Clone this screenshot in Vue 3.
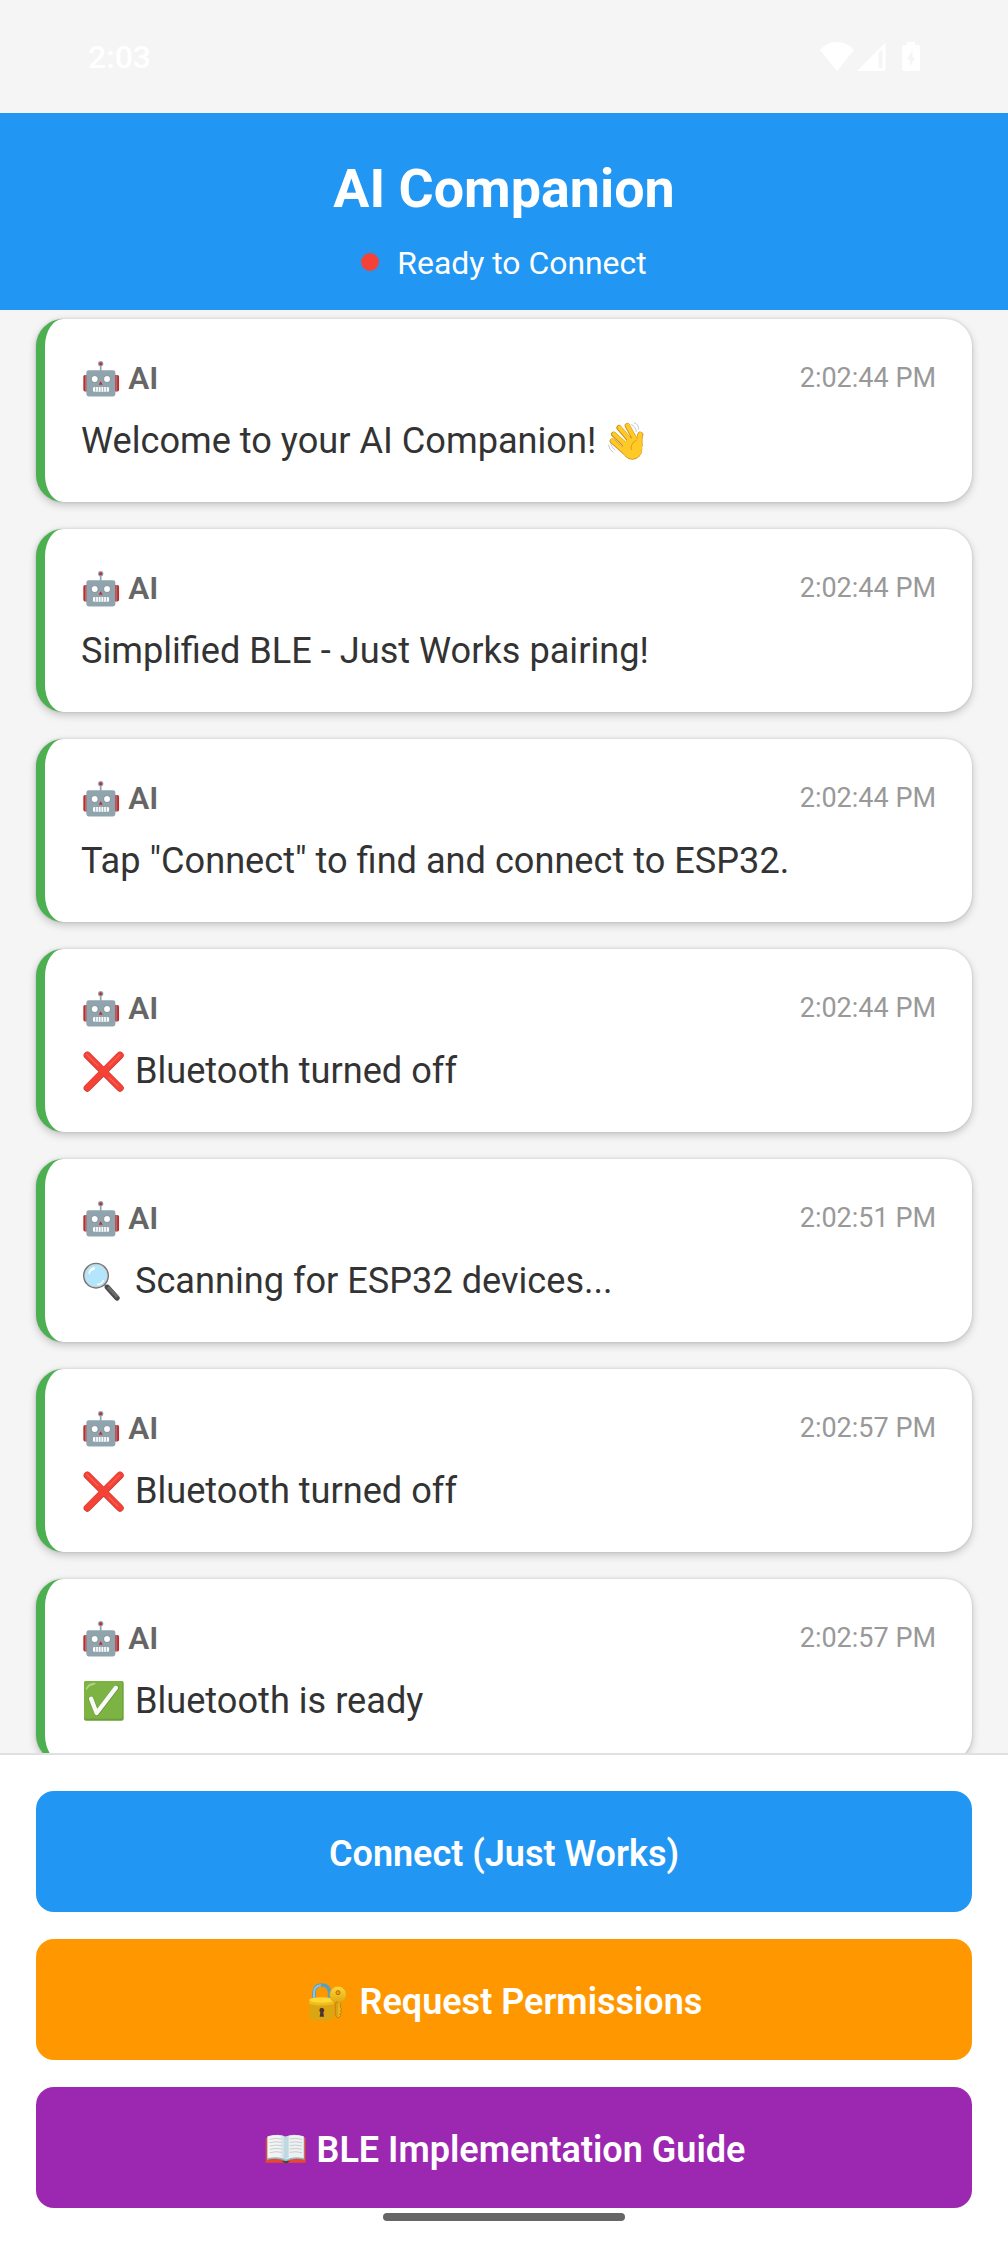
<script setup>
const messages = [
  { time: '2:02:44 PM', text: 'Welcome to your AI Companion!', after: 'wave' },
  { time: '2:02:44 PM', text: 'Simplified BLE - Just Works pairing!' },
  { time: '2:02:44 PM', text: 'Tap "Connect" to find and connect to ESP32.' },
  { time: '2:02:44 PM', before: 'cross', text: 'Bluetooth turned off' },
  { time: '2:02:51 PM', before: 'search', text: 'Scanning for ESP32 devices...' },
  { time: '2:02:57 PM', before: 'cross', text: 'Bluetooth turned off' },
  { time: '2:02:57 PM', before: 'check', text: 'Bluetooth is ready' },
]
const actions = [
  { label: 'Connect (Just Works)', tone: 'blue' },
  { label: 'Request Permissions', tone: 'orange', icon: 'lock' },
  { label: 'BLE Implementation Guide', tone: 'purple', icon: 'book' },
]
</script>

<template>
  <div class="screen">
    <svg class="defs" width="0" height="0" aria-hidden="true">
      <linearGradient id="gold" x1="0" y1="0" x2="0" y2="1">
        <stop offset="0" stop-color="#fdd835" /><stop offset="1" stop-color="#e2a610" />
      </linearGradient>
      <linearGradient id="page" x1="0" y1="0" x2="1" y2="0">
        <stop offset="0" stop-color="#f5f5f5" /><stop offset=".7" stop-color="#f1f3f4" /><stop offset="1" stop-color="#b5d3dc" />
      </linearGradient>
      <symbol id="robot" viewBox="0 0 118 118">
        <rect x="7" y="48" width="16" height="49" rx="5" fill="#c62828" />
        <rect x="98" y="48" width="16" height="49" rx="5" fill="#c62828" />
        <path d="M14 48v49M107 48v49" stroke="#90a4ae" stroke-width="2" />
        <path d="M59 16v20" stroke="#90a4ae" stroke-width="5" />
        <circle cx="59" cy="14" r="8" fill="#90a4ae" /><circle cx="59" cy="14" r="4.5" fill="#c62828" />
        <rect x="16" y="34" width="87" height="78" rx="7" fill="#90a4ae" />
        <circle cx="41" cy="60" r="10.5" fill="#fff" stroke="#62727a" stroke-width="2" />
        <circle cx="78" cy="60" r="10.5" fill="#fff" stroke="#62727a" stroke-width="2" />
        <path d="M53 77l6-10 6 10z" fill="#c62828" />
        <rect x="36" y="84" width="48" height="14" rx="4" fill="#fff" />
        <path d="M44 84v14M52 84v14M60 84v14M68 84v14M76 84v14" stroke="#90a4ae" stroke-width="2.5" />
      </symbol>
      <symbol id="wave" viewBox="0 0 135 135">
        <g stroke-linecap="round" fill="none">
          <g stroke="#c98a14" stroke-width="16">
            <path d="M22 66l38 34M26 46l42 38M42 26l36 42M67 20l22 40" />
          </g>
          <ellipse cx="82" cy="90" rx="30" ry="32" fill="#c98a14" />
          <path d="M106 47q-4 10-2 32" stroke="#c98a14" stroke-width="18" />
          <g stroke="#ffca28" stroke-width="12">
            <path d="M22 65l40 36M27 45l42 39M43 26l37 43M67 19l23 42" />
          </g>
          <ellipse cx="82" cy="89" rx="29" ry="31" fill="#ffca28" />
          <path d="M106 46q-4 10-2 35" stroke="#ffca28" stroke-width="14" />
          <path d="M94 63q-19 11-15 29" stroke="#e0a01b" stroke-width="3" />
          <g stroke="#b0bec5" stroke-width="2.5">
            <path d="M79 17q13 4 15 21M88 11q14 5 13 20M10 78q3 14 14 22M17 75q2 10 13 18" />
          </g>
        </g>
      </symbol>
      <symbol id="cross" viewBox="0 0 135 135">
        <g stroke-linecap="round" fill="none">
          <path d="M19 19l98 98M117 19l-98 98" stroke="#c73328" stroke-width="22" />
          <path d="M19 18l98 98M117 18l-98 98" stroke="#f44336" stroke-width="19" />
          <path d="M17 16l34 34M84 50l31-31M84 85l27 27" stroke="#ff7268" stroke-width="3" />
        </g>
      </symbol>
      <symbol id="search" viewBox="0 0 135 135">
        <path d="M70 76l14 14" stroke="#9e9e9e" stroke-width="7" />
        <path d="M79 85l29 32" stroke="#4b4b4b" stroke-width="16" stroke-linecap="round" />
        <path d="M81 84l28 30" stroke="#6b6b6b" stroke-width="9" />
        <circle cx="45" cy="50" r="36.5" fill="#b3e5fc" stroke="#757575" stroke-width="5" />
        <circle cx="45" cy="50" r="34" fill="none" stroke="#d8cec9" stroke-width="2" />
        <path d="M23 39q3-11 15-15 7 0 2 8-12 3-14 12-4 6-3-5z" fill="#fff" />
        <path d="M48 77q15-2 20-14" stroke="#fff" stroke-width="4" fill="none" />
      </symbol>
      <symbol id="check" viewBox="0 0 135 135">
        <rect x="9" y="6" width="119" height="119" rx="6" fill="#689f38" />
        <rect x="9" y="6" width="115" height="113" rx="6" fill="#7cb342" />
        <path d="M15 31q2-19 27-20 5 3-3 6-14 3-20 13-5 5-4 1z" fill="#aed581" />
        <path d="M30 60l18 42 58-76" fill="none" stroke="#5f9632" stroke-width="16" stroke-linecap="round" stroke-linejoin="round" />
        <path d="M30 59l17 43 58-76" fill="none" stroke="#fafafa" stroke-width="13" stroke-linecap="round" stroke-linejoin="round" />
      </symbol>
      <symbol id="lock" viewBox="0 0 135 135">
        <path d="M24 65V40q1-22 23-22t24 22v25" fill="none" stroke="#5b9fbd" stroke-width="11" />
        <path d="M24 58V40q1-20 21-21" fill="none" stroke="#8fc3da" stroke-width="6" />
        <path d="M10 63v50q0 12 37 12t37-12V63z" fill="#dba514" />
        <path d="M10 63v12q37 9 74 0V63z" fill="#f0bd1c" />
        <ellipse cx="47" cy="63" rx="37" ry="8" fill="#fdd835" />
        <path d="M47 86a8 8 0 0 0-4 14l-2 13h13l-2-13a8 8 0 0 0-5-14z" fill="#4e342e" />
        <path d="M88 62v48l8 7 9-7-4-5 6-4-4-6 4-5-4-5V62z" fill="#edb61f" stroke="#a66f12" stroke-width="2" />
        <circle cx="96" cy="47" r="25" fill="url(#gold)" stroke="#d99a13" stroke-width="1.5" />
        <circle cx="96" cy="41" r="6" fill="#ff9800" stroke="#a66f12" stroke-width="3" />
        <path d="M93 66v47" stroke="#a97517" stroke-width="2" />
      </symbol>
      <symbol id="book" viewBox="0 0 135 135">
        <path d="M8 33h120v74H77q-8 6-17 0H8z" fill="#e6492f" />
        <path d="M57 102h23l-7 7q-4 2-8 0z" fill="#37474f" />
        <path d="M12 98V30q34-13 57-1v74q-20-12-57-5z" fill="#8fb9c6" />
        <path d="M124 98V30Q91 17 68 29v74q23-12 56-5z" fill="#8fb9c6" />
        <path d="M14 93V28q33-9 54 1v69q-17-12-54-5z" fill="url(#page)" />
        <path d="M122 93V28q-33-9-54 1v69q20-12 54-5z" fill="#eef1f2" />
        <path d="M69 30v66l8-5V27z" fill="#c0d9e0" />
        <path d="M20 37q19-5 37-1M20 47q19-5 37-1M20 57q19-5 37-1M20 67q19-5 37-1M20 77q19-5 37-1M80 36q18-4 37 1M80 46q18-4 37 1M80 56q18-4 37 1M80 66q18-4 37 1M80 76q18-4 37 1" stroke="#b6b9ba" stroke-width="2" fill="none" />
      </symbol>
    </svg>

    <div class="statusbar">
      <span class="clock">2:03</span>
      <div class="indicators">
        <svg width="34" height="29" viewBox="0 0 34 29"><path d="M17 29L0 8Q7 0 17 0t17 8z" fill="#fff" /></svg>
        <svg class="signal" width="29" height="29" viewBox="0 0 29 29"><path fill-rule="evenodd" d="M0 29L28.500 .5V29zM21.500 11v15h4V7z" fill="#fff" /></svg>
        <svg class="battery" width="18" height="29" viewBox="0 0 18 29"><path fill-rule="evenodd" d="M5 0h8v3h3q2 0 2 2v22q0 2-2 2H2q-2 0-2-2V5q0-2 2-2h3zM10.500 8L5 17.500h3V25l5-9.500h-2.500z" fill="#fff" /></svg>
      </div>
    </div>

    <header class="header">
      <h1>AI Companion</h1>
      <div class="status"><i class="dot"></i><span>Ready to Connect</span></div>
    </header>

    <main class="messages">
      <article v-for="(m, i) in messages" :key="i" class="card">
        <div class="meta">
          <span class="sender"><svg class="emoji small"><use href="#robot" /></svg> AI</span>
          <time>{{ m.time }}</time>
        </div>
        <p><template v-if="m.before"><svg class="emoji"><use :href="'#' + m.before" /></svg>&nbsp;</template>{{ m.text }}<template v-if="m.after">&nbsp;<svg class="emoji"><use :href="'#' + m.after" /></svg></template></p>
      </article>
    </main>

    <footer class="actions">
      <button v-for="a in actions" :key="a.label" :class="a.tone">
        <span><template v-if="a.icon"><svg class="emoji"><use :href="'#' + a.icon" /></svg>&nbsp;</template>{{ a.label }}</span>
      </button>
      <div class="pill"></div>
    </footer>
  </div>
</template>

<style>
body { margin: 0; background: #f5f5f5; }
</style>

<style scoped>
.screen { width: 1008px; height: 2244px; display: flex; flex-direction: column; overflow: hidden; position: relative; background: #f5f5f5; font-family: Roboto, "Liberation Sans", sans-serif; }
.defs { position: absolute; }
.statusbar { height: 113px; flex: none; box-sizing: border-box; padding: 0 88px; display: flex; justify-content: space-between; color: #fff; }
.clock { font: 500 32px/36px Roboto, sans-serif; margin-top: 39px; }
.indicators { display: flex; margin-top: 42px; height: 29px; }
.signal { margin-left: 3px; }
.battery { margin-left: 16px; }
.header { height: 197px; flex: none; box-sizing: border-box; padding-top: 36px; background: #2196f3; color: #fff; text-align: center; }
h1 { margin: 0; font-size: 53.8px; line-height: 79px; font-weight: 700; }
.status { margin-top: 16px; height: 36px; display: flex; align-items: center; justify-content: center; font-size: 31.9px; line-height: 36px; }
.status span { padding-top: 2px; }
.dot { width: 18px; height: 18px; margin-right: 18px; border-radius: 50%; background: #f44336; }
.messages { flex: 1; min-height: 0; overflow: hidden; padding: 9px 36px 0; }
.card { height: 183px; box-sizing: border-box; margin-bottom: 27px; padding: 36px; border-left: 9px solid #4caf50; border-radius: 27px; background: #fff; box-shadow: 0 3px 8px rgba(0, 0, 0, .2), 0 0 3px rgba(0, 0, 0, .14); }
.meta { display: flex; justify-content: space-between; align-items: center; height: 43px; padding-top: 2px; margin-bottom: 16px; }
.sender { font-size: 31.5px; line-height: 43px; height: 43px; font-weight: 600; color: #666; }
time { font-size: 27px; line-height: 43px; color: #999; }
p { margin: 0; height: 50px; font-size: 36.15px; line-height: 50px; color: #333; white-space: nowrap; }
.emoji { width: 45px; height: 45px; vertical-align: -10.7px; }
.emoji.small { width: 39.4px; height: 39.4px; vertical-align: -9.3px; }
.actions { flex: none; height: 491px; box-sizing: border-box; border-top: 2px solid #e0e0e0; padding: 36px; background: #fff; display: flex; flex-direction: column; gap: 27px; position: relative; }
button { height: 121px; flex: none; border: 0; border-radius: 18px; padding: 0; font: 600 36px/50px Roboto, "Liberation Sans", sans-serif; color: #fff; }
button span { display: block; height: 50px; margin-top: 4px; }
.blue { background: #2196f3; }
.orange { background: #ff9800; }
.purple { background: #9c27b0; }
.pill { position: absolute; left: 383px; bottom: 23px; width: 242px; height: 8px; border-radius: 4px; background: #666; }
</style>
